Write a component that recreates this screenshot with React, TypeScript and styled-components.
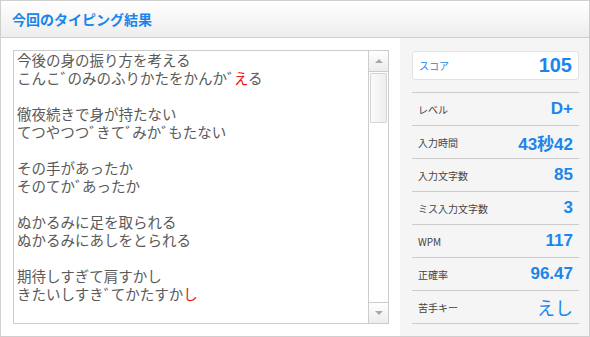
import React from "react";
import styled, { createGlobalStyle } from "styled-components";

const GlobalStyle = createGlobalStyle`
  html, body {
    margin: 0;
    padding: 0;
    background: #fff;
  }
  body {
    font-family: "Noto Sans CJK JP", "Noto Sans", sans-serif;
  }
`;

const Panel = styled.div`
  width: 590px;
  height: 337px;
  box-sizing: border-box;
  border: 1px solid #cfcfcf;
  display: flex;
  flex-direction: column;
`;

const Header = styled.div`
  height: 37px;
  box-sizing: border-box;
  border-bottom: 1px solid #cfcfcf;
  background: linear-gradient(#ffffff, #ededed);
  display: flex;
  align-items: center;
  padding-left: 11px;
`;

const Title = styled.h1`
  margin: 0;
  font-size: 14px;
  font-weight: bold;
  color: #1a86ec;
`;

const Body = styled.div`
  flex: 1;
  display: flex;
  min-height: 0;
`;

const Main = styled.div`
  width: 399px;
  padding: 12px 11px 12px 12px;
  box-sizing: border-box;
  background: #fff;
`;

const TextBox = styled.div`
  height: 100%;
  border: 1px solid #cccccc;
  display: flex;
  box-sizing: border-box;
`;

const Lines = styled.div`
  flex: 1;
  padding: 0 3px;
  font-family: "Noto Sans CJK JP", sans-serif;
  font-size: 14.5px;
  line-height: 18px;
  color: #5a5a5a;
  overflow: hidden;
`;

const Line = styled.div`
  height: 18px;
  white-space: nowrap;
`;

const Miss = styled.span`
  color: #ee1111;
`;

const Dakuten = styled.span`
  display: inline-block;
  width: 7px;
  overflow: visible;
`;

const Scrollbar = styled.div`
  width: 19px;
  border-left: 1px solid #cccccc;
  display: flex;
  flex-direction: column;
  background: #fff;
`;

const ArrowButton = styled.div<{ $down?: boolean }>`
  height: 21px;
  box-sizing: border-box;
  background: linear-gradient(#ffffff, #ececec);
  ${(p) => (p.$down ? "border-top: 1px solid #cccccc;" : "border-bottom: 1px solid #cccccc;")}
  display: flex;
  align-items: center;
  justify-content: center;
`;

const Arrow = styled.span<{ $down?: boolean }>`
  width: 0;
  height: 0;
  border-left: 4px solid transparent;
  border-right: 4px solid transparent;
  ${(p) =>
    p.$down ? "border-top: 4px solid #a8a8a8;" : "border-bottom: 4px solid #a8a8a8;"}
`;

const Track = styled.div`
  flex: 1;
  padding: 1px 1px;
`;

const Thumb = styled.div`
  height: 50px;
  box-sizing: border-box;
  border: 1px solid #d4d4d4;
  border-radius: 1px;
  background: linear-gradient(to right, #fafafa, #eeeeee);
`;

const Side = styled.div`
  flex: 1;
  background: #f5f5f5;
  padding: 13px 10px 0 12px;
`;

const ScoreBox = styled.div`
  height: 29px;
  box-sizing: border-box;
  background: #fff;
  border: 1px solid #e2e2e2;
  border-radius: 3px;
  display: flex;
  align-items: center;
  justify-content: space-between;
  padding: 0 6px;
  margin-bottom: 12px;
`;

const ScoreLabel = styled.span`
  font-size: 10px;
  color: #1a86ec;
`;

const ScoreValue = styled.span`
  font-family: "Liberation Sans", Arial, sans-serif;
  font-size: 20px;
  font-weight: bold;
  color: #1a86ec;
`;

const StatList = styled.div`
  border-bottom: 1px solid #cccccc;
`;

const Row = styled.div`
  height: 33px;
  box-sizing: border-box;
  border-top: 1px solid #cccccc;
  display: flex;
  align-items: center;
  justify-content: space-between;
  padding: 0 6px;
`;

const Label = styled.span`
  font-size: 10px;
  color: #444;
`;

const Value = styled.span<{ $kana?: boolean }>`
  font-family: ${(p) =>
    p.$kana ? '"Noto Sans CJK JP", sans-serif' : '"Liberation Sans", Arial, "Noto Sans CJK JP", sans-serif'};
  font-size: ${(p) => (p.$kana ? "18px" : "17px")};
  font-weight: ${(p) => (p.$kana ? "normal" : "bold")};
  color: #1a86ec;
`;

const D = () => <Dakuten>゛</Dakuten>;

const stats = [
  { label: "レベル", value: "D+" },
  { label: "入力時間", value: "43秒42" },
  { label: "入力文字数", value: "85" },
  { label: "ミス入力文字数", value: "3" },
  { label: "WPM", value: "117" },
  { label: "正確率", value: "96.47" },
  { label: "苦手キー", value: "えし", kana: true },
];

export default function App() {
  return (
    <>
      <GlobalStyle />
      <Panel>
        <Header>
          <Title>今回のタイピング結果</Title>
        </Header>
        <Body>
          <Main>
            <TextBox>
              <Lines>
                <Line>今後の身の振り方を考える</Line>
                <Line>
                  こんこ<D />のみのふりかたをかんか<D />
                  <Miss>え</Miss>る
                </Line>
                <Line />
                <Line>徹夜続きで身が持たない</Line>
                <Line>
                  てつやつつ<D />きて<D />みか<D />もたない
                </Line>
                <Line />
                <Line>その手があったか</Line>
                <Line>
                  そのてか<D />あったか
                </Line>
                <Line />
                <Line>ぬかるみに足を取られる</Line>
                <Line>ぬかるみにあしをとられる</Line>
                <Line />
                <Line>期待しすぎて肩すかし</Line>
                <Line>
                  きたいしすき<D />てかたすか<Miss>し</Miss>
                </Line>
              </Lines>
              <Scrollbar>
                <ArrowButton>
                  <Arrow />
                </ArrowButton>
                <Track>
                  <Thumb />
                </Track>
                <ArrowButton $down>
                  <Arrow $down />
                </ArrowButton>
              </Scrollbar>
            </TextBox>
          </Main>
          <Side>
            <ScoreBox>
              <ScoreLabel>スコア</ScoreLabel>
              <ScoreValue>105</ScoreValue>
            </ScoreBox>
            <StatList>
              {stats.map((s) => (
                <Row key={s.label}>
                  <Label>{s.label}</Label>
                  <Value $kana={s.kana}>{s.value}</Value>
                </Row>
              ))}
            </StatList>
          </Side>
        </Body>
      </Panel>
    </>
  );
}
